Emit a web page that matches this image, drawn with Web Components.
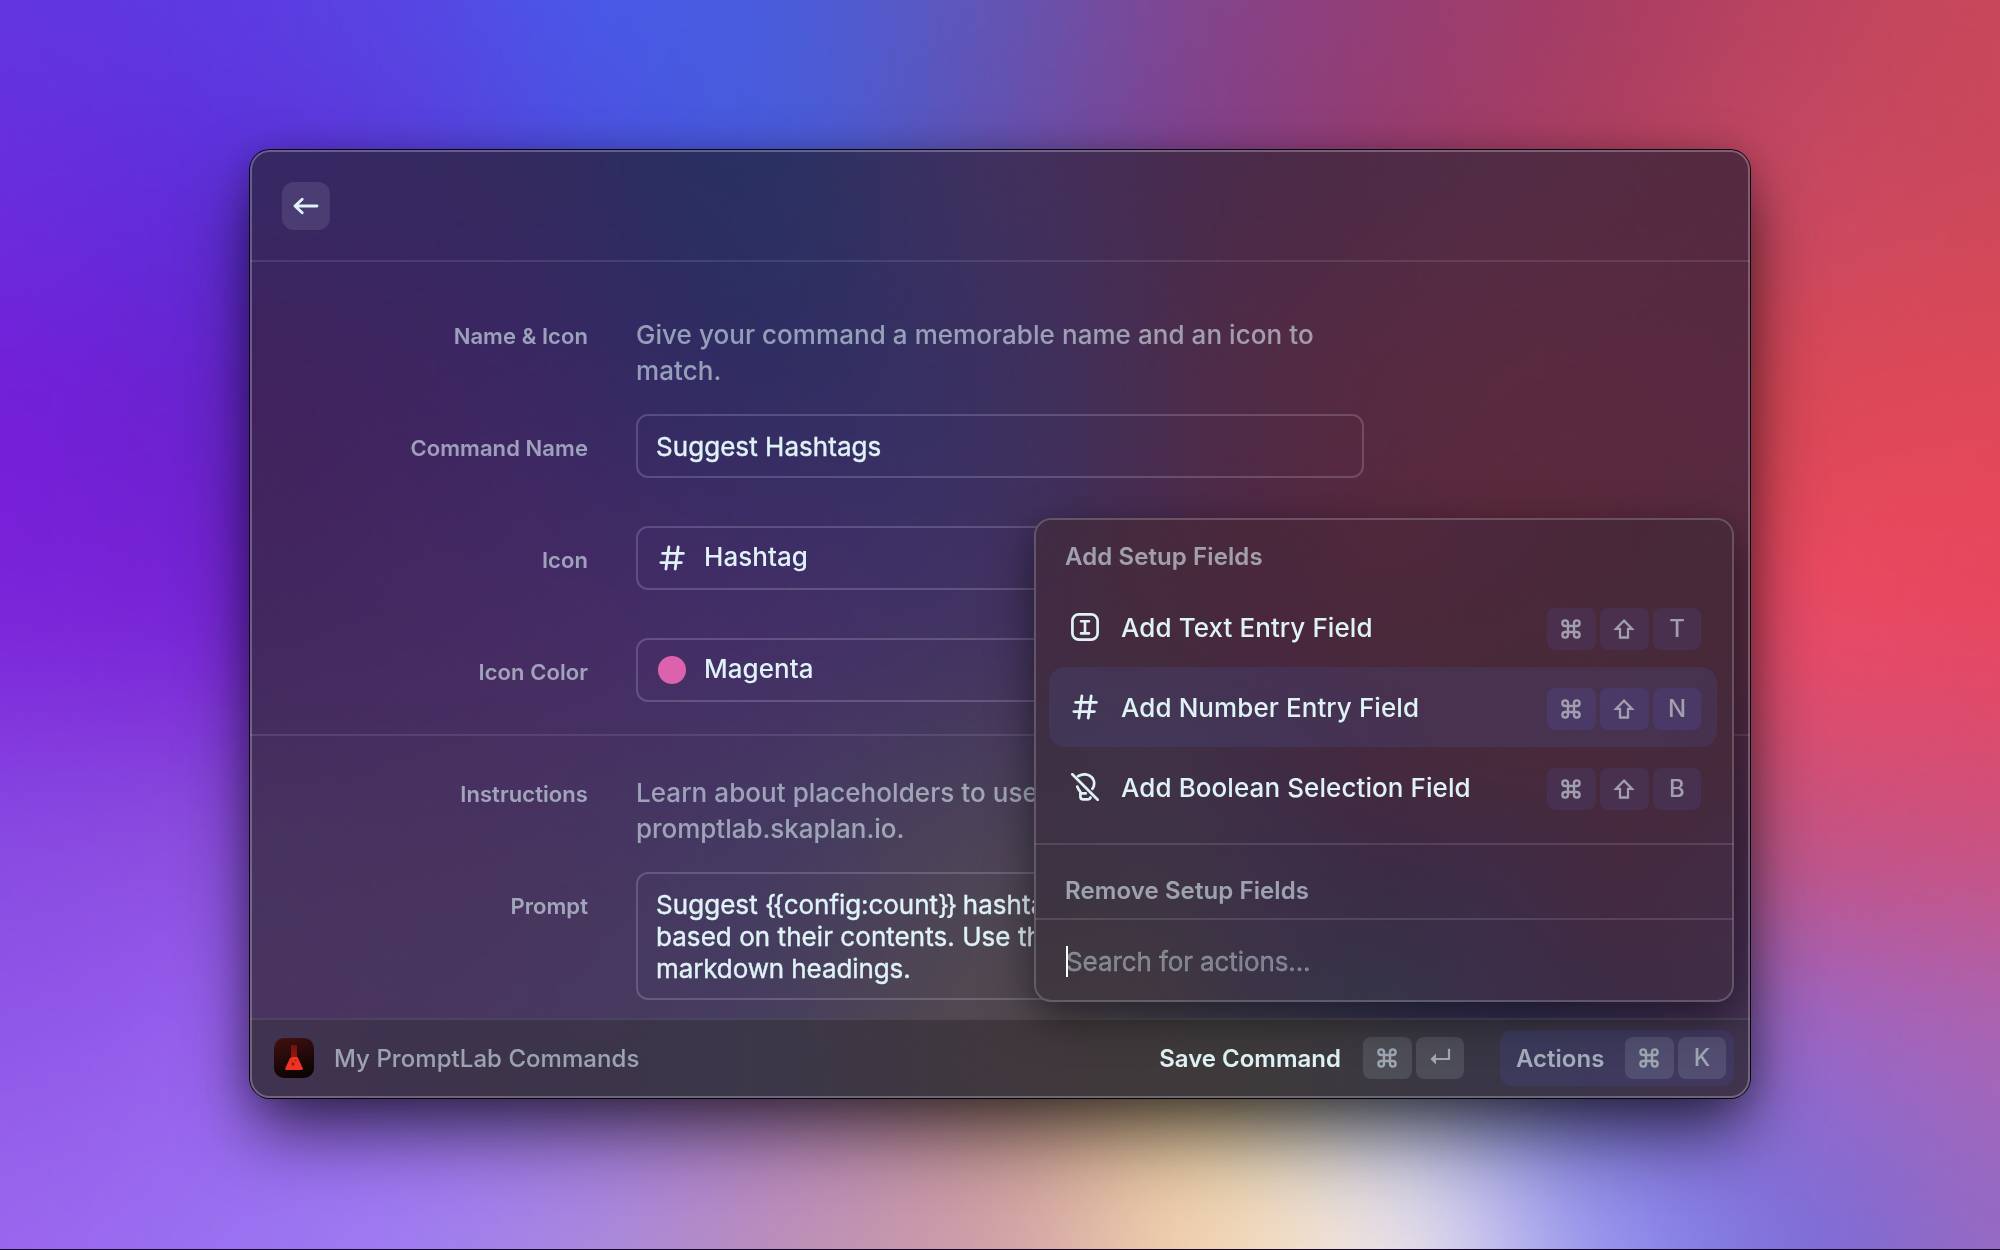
<!DOCTYPE html>
<html lang="en">
<head>
<meta charset="utf-8">
<title>Suggest Hashtags</title>
<style>
html,body{margin:0;height:100%;background:#140628}
body{font-family:Inter,"Liberation Sans",sans-serif;color:#dff3f6;overflow:hidden}
</style>
</head>
<body>
<desktop-scene></desktop-scene>
<script>
const hex = h => [0, 2, 4].map(i => parseInt(h.substr(i, 2), 16));
const cr = (a, b, c, d, t) => b + .5 * t * (c - a + t * (2 * a - 5 * b + 4 * c - d + t * (3 * (b - c) + d - a)));

/* A smooth colour field drawn from a coarse grid of control colours. */
class MeshGradient extends HTMLElement {
  constructor() {
    super();
    this.attachShadow({mode: 'open'}).innerHTML =
      `<style>:host{display:block;overflow:hidden}canvas{display:block;width:100%;height:100%}</style><canvas width="400" height="250"></canvas>`;
  }
  connectedCallback() {
    const g = this.getAttribute('colors').trim().split('|').map(r => r.trim().split(/\s+/).map(hex));
    const R = g.length, C = g[0].length, cv = this.shadowRoot.querySelector('canvas'), W = cv.width, H = cv.height;
    const x = cv.getContext('2d'), im = x.createImageData(W, H);
    const at = (r, c, k) => g[Math.max(0, Math.min(R - 1, r))][Math.max(0, Math.min(C - 1, c))][k];
    for (let j = 0; j < H; j++) for (let i = 0; i < W; i++) {
      const u = i / (W - 1) * (C - 1), v = j / (H - 1) * (R - 1);
      const c = Math.min(C - 1, u | 0), r = Math.min(R - 1, v | 0), fu = u - c, fv = v - r, o = (j * W + i) * 4;
      for (let k = 0; k < 3; k++) {
        const q = [-1, 0, 1, 2].map(d => cr(at(r + d, c - 1, k), at(r + d, c, k), at(r + d, c + 1, k), at(r + d, c + 2, k), fu));
        im.data[o + k] = cr(q[0], q[1], q[2], q[3], fv) + Math.random() - .5;
      }
      im.data[o + 3] = 255;
    }
    x.putImageData(im, 0, 0);
  }
}
customElements.define('mesh-gradient', MeshGradient);

const ICONS = {
  back: [28, '<path d="M25 14H3M10.2 7.2 3 14l7.2 6.8" stroke-width="2.9"/>'],
  hash: [28, '<path d="M10.9 3 7.900 25M20.200 3 17.200 25M4.600 9.400H25.400M2.800 18.600H23.400" stroke-width="2.8"/>'],
  text: [28, '<rect x="1.4" y="1.4" width="25.2" height="25.2" rx="6.4" stroke-width="2.7"/><path d="M10 8.2h8M10 20.4h8M14 8.2v12.2" stroke-width="2.6"/>'],
  bulb: [28, '<path d="M1.3 1.3 26.7 26.7M7.2 3.1C9 1.9 11.2 1.3 13.6 1.3c5.4 0 9.6 4 9.6 9.2 0 2-.7 3.9-1.8 5.3M6.3 13.6c.6 2.2 2 3.9 3.1 5.2v4.6c0 1.7 1.2 3 2.9 3h4.4c1.3 0 2.4-.8 2.8-1.9M9.8 20.4h5" stroke-width="2.7"/>'],
  cmd: [20, '<path d="M7 7h6v6H7zM7 7H4.2A2.8 2.8 0 1 1 7 4.2zM13 7V4.200A2.800 2.800 0 1 1 15.800 7zM13 13h2.800a2.800 2.800 0 1 1-2.800 2.800zM7 13v2.800A2.800 2.800 0 1 1 4.200 13z" stroke-width="2.4"/>'],
  shift: [22, '<path d="M11 2.600 19 10.800H15v8.700H7V10.800H3z" stroke-width="2.3" stroke-linejoin="miter"/>'],
  ret: [22, '<path d="M20 1.800V12H5" stroke-width="2.200" stroke-linecap="butt" stroke-linejoin="miter"/><path d="M1.400 12 7 6.400v11.200z" fill="currentColor" stroke="none"/>']
};
class UiIcon extends HTMLElement {
  connectedCallback() {
    const [s, d] = ICONS[this.getAttribute('name')];
    this.attachShadow({mode: 'open'}).innerHTML =
      `<style>:host{display:block;flex:none;width:${s}px;height:${s}px}svg{display:block}</style><svg width="${s}" height="${s}" viewBox="0 0 ${s} ${s}" fill="none" stroke="currentColor" stroke-linecap="round" stroke-linejoin="round">${d}</svg>`;
  }
}
customElements.define('ui-icon', UiIcon);

const define = (name, html) => customElements.define(name, class extends HTMLElement {
  constructor() {
    super();
    const t = document.createElement('template');
    t.innerHTML = html;
    this.attachShadow({mode: 'open'}).append(t.content.cloneNode(true));
  }
});

define('key-cap', `<style>
:host{display:flex;align-items:center;justify-content:center;box-sizing:border-box;flex:none;width:49px;height:42px;padding-right:1px;border-radius:8px;background:var(--cap,rgba(82,72,150,.22));color:#a19fae;font-size:24px;font-weight:500;line-height:42px}
:host(:last-of-type){width:48px;padding-right:0}
</style><slot></slot>`);
define('key-row', `<style>:host{display:flex;gap:4px;flex:none}</style><slot></slot>`);

define('form-row', `<style>
:host{display:grid;grid-template-columns:338px 728px;column-gap:48px;align-items:baseline}
:host([select]){align-items:start}
:host([select]) .l{padding-top:16px}
.l{text-align:right;font-size:22px;font-weight:600;letter-spacing:.07px;line-height:36px;color:rgba(222,241,247,.6)}
</style><div class="l"><slot name="label"></slot></div><slot></slot>`);
define('form-note', `<style>
:host{display:block;font-size:26px;font-weight:500;line-height:36px;letter-spacing:.06px;color:rgba(222,241,247,.58);white-space:nowrap}
::slotted(.tight){letter-spacing:-.03px}
</style><slot></slot>`);
define('text-box', `<style>
:host{display:block;box-sizing:border-box;border:2px solid rgba(235,235,255,.19);border-radius:12px;padding:15px 18px 0;font-size:26px;line-height:32px;letter-spacing:.05px;-webkit-text-stroke:.4px currentColor;white-space:nowrap;height:64px;overflow:hidden}
:host([multi]){height:128px}
::slotted(.brace){letter-spacing:-3.1px}
::slotted(.cfg){letter-spacing:-.06px}
::slotted(.end){letter-spacing:-1.6px}
::slotted(.tight){letter-spacing:-.1px}
</style><slot></slot>`);
define('select-box', `<style>
:host{display:flex;align-items:center;box-sizing:border-box;border:2px solid rgba(235,235,255,.19);border-radius:12px;padding:0 0 2px 20px;gap:18px;font-size:26px;font-weight:500;line-height:32px;letter-spacing:.06px;height:64px}
::slotted([slot=icon]){position:relative;top:1px}
</style><slot name="icon"></slot><span><slot></slot></span>`);
define('color-dot', `<style>:host{display:block;flex:none;width:28px;height:28px;border-radius:50%;background:#dd62ae}</style>`);

define('action-title', `<style>:host{display:block;padding:6px 0 0 29px;font-size:24px;font-weight:600;line-height:61px;letter-spacing:.1px;color:rgba(222,238,244,.6)}
:host([lower]){padding-top:18px;line-height:55px}</style><span><slot></slot></span>`);
define('action-item', `<style>
:host{display:flex;align-items:center;box-sizing:border-box;height:80px;width:668px;margin-left:13px;padding:0 16px 0 22px;border-radius:16px;font-size:26px;font-weight:500;letter-spacing:.08px}
:host([selected]){background:rgba(74,74,130,.3);--cap:rgba(82,72,155,.3)}
span{flex:1;padding-left:22px}
::slotted(key-row){position:relative;top:2px}
</style><slot name="icon"></slot><span><slot></slot></span><slot name="keys"></slot>`);

define('action-panel', `<style>
:host{display:block;position:absolute;left:784px;top:368px;width:700px;height:484px;border-radius:17px;overflow:hidden}
mesh-gradient{position:absolute;inset:0}
.c{position:relative;padding:2px}
.edge{position:absolute;inset:0;border:2px solid rgba(235,235,245,.21);border-radius:17px}
.hr{height:2px;margin:0 -1px;background:rgba(235,235,255,.13)}
.pad{height:16px}
.search{display:flex;align-items:center;height:82px;padding-left:30px;font-size:26px}
.caret{width:2px;height:31px;background:#fff}
.ph{margin-left:-2px;letter-spacing:-.1px;color:rgba(222,238,244,.42);-webkit-text-stroke:.3px currentColor}
</style>
<mesh-gradient colors="402c44 472a3e 4a283c 50283c 4c283c 492838 482a3a|422c44 452b3e 48283e 4a293b 49293a 482a3a 47293a|3e3044 403146 402c44 45293f 472a3c 47293c 462a3c|3d3342 3e3444 3d3048 3c2c46 3f2c46 442a40 432c44|403840 403840 3b3447 373448 3c2f4a 3d2c45 402e46"></mesh-gradient>
<div class="c">
<action-title>Add Setup Fields</action-title>
<action-item><ui-icon slot="icon" name="text"></ui-icon>Add Text Entry Field<key-row slot="keys"><key-cap><ui-icon name="cmd"></ui-icon></key-cap><key-cap><ui-icon name="shift"></ui-icon></key-cap><key-cap>T</key-cap></key-row></action-item>
<action-item selected><ui-icon slot="icon" name="hash"></ui-icon>Add Number Entry Field<key-row slot="keys"><key-cap><ui-icon name="cmd"></ui-icon></key-cap><key-cap><ui-icon name="shift"></ui-icon></key-cap><key-cap>N</key-cap></key-row></action-item>
<action-item><ui-icon slot="icon" name="bulb"></ui-icon>Add Boolean Selection Field<key-row slot="keys"><key-cap><ui-icon name="cmd"></ui-icon></key-cap><key-cap><ui-icon name="shift"></ui-icon></key-cap><key-cap>B</key-cap></key-row></action-item>
<div class="pad"></div><div class="hr"></div>
<action-title lower>Remove Setup Fields</action-title>
<div class="hr"></div>
<div class="search"><i class="caret"></i><span class="ph">Search for actions...</span></div>
</div><div class="edge"></div>`);

define('app-footer', `<style>
:host{display:block;height:80px;position:relative}
mesh-gradient{position:absolute;inset:0}
.c{position:relative;display:flex;align-items:center;box-sizing:border-box;height:80px;border-top:2px solid rgba(235,235,255,.09);padding:0 16px 2px 24px;font-size:24px;--cap:rgba(225,235,245,.12)}
.name{flex:1;padding-left:20px;font-weight:500;letter-spacing:.05px;color:rgba(214,232,238,.62)}
.save{font-weight:600;margin-right:22px}
.act{display:flex;align-items:center;height:56px;margin-left:36px;padding:0 8px 0 16px;border-radius:12px;background:rgba(68,72,150,.26)}
.act span{margin-right:20.7px;font-weight:600;color:#a3adbb}
key-cap{color:#9ea8b2}
svg{display:block;flex:none}
</style>
<mesh-gradient colors="403350 3d344c 3c3749 40383e 3e3a3c 393645 40334d|403350 3d344a 3c3749 40383e 3e3a3c 3a3647 40334d"></mesh-gradient>
<div class="c">
<svg width="40" height="40" viewBox="0 0 40 40"><defs><linearGradient id="b" x1="0.2" y1="0" x2="0.5" y2="1"><stop offset="0" stop-color="#400f10"/><stop offset="1" stop-color="#0b0403"/></linearGradient><linearGradient id="f" x1="0" y1="0" x2="0" y2="1"><stop offset="0" stop-color="#6f130e"/><stop offset="1" stop-color="#96190f"/></linearGradient></defs>
<rect width="40" height="40" rx="10" fill="url(#b)"/><path d="M17 7h6v14h-6z" fill="url(#f)"/><path d="M16 20l3-1 4.500 0 1 2 4.300 9.200q.6 1.800-1.400 1.800H12.700q-2 0-1.400-1.800z" fill="#f03322"/><circle cx="19" cy="26" r="1.600" fill="#8c1a12"/><circle cx="21.500" cy="22.500" r="1.100" fill="#b0241a"/><circle cx="17.500" cy="23.500" r=".8" fill="#b0241a"/></svg>
<span class="name">My PromptLab Commands</span>
<span class="save">Save Command</span><key-row><key-cap><ui-icon name="cmd"></ui-icon></key-cap><key-cap><ui-icon name="ret"></ui-icon></key-cap></key-row>
<div class="act"><span>Actions</span><key-row><key-cap><ui-icon name="cmd"></ui-icon></key-cap><key-cap>K</key-cap></key-row></div>
</div>`);

define('app-window', `<style>
:host{display:block;position:relative;width:1500px;height:948px;border-radius:20px;box-shadow:0 0 0 1px #0a0412,0 36px 70px -4px rgba(0,0,0,.64),0 4px 36px rgba(0,0,0,.22)}
.clip{position:absolute;inset:0;border-radius:20px;overflow:hidden}
mesh-gradient.bg{position:absolute;inset:0}
.col{position:relative;display:flex;flex-direction:column;height:948px}
header{border-bottom:2px solid rgba(235,235,255,.11);padding:32px 0 0 32px;height:78px}
.back{display:flex;align-items:center;justify-content:center;width:48px;height:48px;border-radius:12px;background:rgba(235,235,255,.11)}
.s{display:flex;flex-direction:column;gap:48px;padding:55px 0 32px;border-bottom:2px solid rgba(235,235,255,.11)}
.s.two{padding:39px 0 18px;border:0}
.g{display:flex;flex-direction:column;gap:25px}
.edge{position:absolute;inset:0;border:2px solid rgba(240,235,250,.27);border-radius:20px}
action-panel{z-index:1}
.sh{position:absolute;left:784px;top:368px;width:700px;height:484px;border-radius:17px;box-shadow:0 14px 44px rgba(0,0,0,.5)}
</style>
<div class="clip"><mesh-gradient class="bg" colors="362964 33295f 2a3062 40305e 4a2a49 522c45 552a40|40235e 3c2762 322d63 3c305f 502b46 592a40 582940|43285f 452b63 432f66 423360 4f2b48 582a3d 552b40|483360 48345f 453a61 4d4456 493f55 3f3050 482a4a|4a345f 48385f 483e5e 52494c 3c3a50 302f54 463458"></mesh-gradient>
<div class="col">
<header><div class="back"><ui-icon name="back"></ui-icon></div></header>
<div class="s">
<div class="g">
<form-row><span slot="label">Name &amp; Icon</span><form-note>Give your command a memorable name and an icon to<br>match.</form-note></form-row>
<form-row><span slot="label">Command Name</span><text-box>Suggest Hashtags</text-box></form-row>
</div>
<form-row select><span slot="label">Icon</span><select-box><ui-icon slot="icon" name="hash"></ui-icon>Hashtag</select-box></form-row>
<form-row select><span slot="label">Icon Color</span><select-box><color-dot slot="icon"></color-dot>Magenta</select-box></form-row>
</div>
<div class="s two"><div class="g">
<form-row><span slot="label">Instructions</span><form-note>Learn about placeholders to use<br><span class="tight">promptlab.skaplan.io.</span></form-note></form-row>
<form-row><span slot="label">Prompt</span><text-box multi>Suggest <span class="brace">{</span><span class="cfg">{config:count</span><span class="brace">}</span><span class="end">}</span> hashtags<br>based on their contents. Use the<br><span class="tight">markdown headings.</span></text-box></form-row>
</div></div>
<app-footer></app-footer>
</div>
<div class="sh"></div>
<action-panel></action-panel>
<div class="edge"></div></div>`);

define('desktop-scene', `<style>
:host{display:block;position:relative;width:2000px;height:1249px;overflow:hidden}
mesh-gradient{position:absolute;inset:0}
.c{position:relative;display:flex;justify-content:center;padding-top:150px}
</style>
<mesh-gradient colors="
6235de 5d3ae0 5745e3 4a58e6 4c5cd8 6454b4 82458e 963e74 a83e64 bc4460 c8485a|
6a2cdc 602ed8 5a3ad8 4c4edb 4a58d4 644fac 834088 9a3c6c b04060 c84860 ce485a|
7420d8 6a24d0 6030d0 5440d0 5048c8 6848a0 904080 a83c68 c04060 da4858 e04858|
7c28da 7828d6 7030d0 6840c8 6848c0 7850a0 985080 b04870 c84468 e44a66 e64862|
8848e2 8a4cde 8450d8 8058d0 8860b8 986898 a87088 b07080 b06088 c45484 cc5280|
9058e8 9660ec 9468e6 9a70d8 ac7cb8 b88c88 cab090 a8a8c8 7c6cc4 9866c4 a864b4|
9a66ee 9a70f0 9f7cf0 aa88dc bd90b8 d2a4a8 f0d2b2 e4dce6 9a96ec 8070d8 946ac4"></mesh-gradient>
<div class="c"><app-window></app-window></div>`);
</script>
</body>
</html>
